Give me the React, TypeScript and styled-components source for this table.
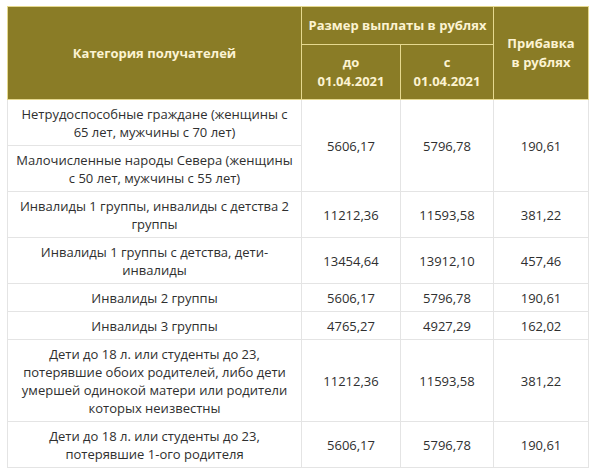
import React from "react";
import styled, { createGlobalStyle } from "styled-components";

const Global = createGlobalStyle`
  html, body { margin: 0; padding: 0; background: #ffffff; }
  body { font-family: "Open Sans", "Noto Sans", sans-serif; }
`;

const Page = styled.div`
  padding: 6px 12px 8px 7px;
`;

const Table = styled.table`
  width: 581px;
  border-collapse: collapse;
  table-layout: fixed;
  font-family: "Open Sans", "Noto Sans", sans-serif;
`;

const HeadCell = styled.th<{ $pad?: number }>`
  background: #8a7c26;
  color: #fcf3d2;
  font-weight: 700;
  font-size: 13px;
  line-height: 19px;
  text-align: center;
  vertical-align: middle;
  padding: ${(p) => p.$pad ?? 8}px 4px;
  border: 1px solid #e6d98f;
`;

const Cell = styled.td<{ $wide?: boolean }>`
  color: #2f2f2f;
  font-size: 13px;
  line-height: 18px;
  text-align: center;
  vertical-align: middle;
  padding: 4.5px ${(p) => (p.$wide ? 7 : 6)}px;
  border: 1px solid #e4e4e4;
`;

type Row = { name: string; a?: string; b?: string; c?: string; span?: number; skip?: boolean };

const rows: Row[] = [
  { name: "Нетрудоспособные граждане (женщины с 65 лет, мужчины с 70 лет)", a: "5606,17", b: "5796,78", c: "190,61", span: 2 },
  { name: "Малочисленные народы Севера (женщины с 50 лет, мужчины с 55 лет)", skip: true },
  { name: "Инвалиды 1 группы, инвалиды с детства 2 группы", a: "11212,36", b: "11593,58", c: "381,22" },
  { name: "Инвалиды 1 группы с детства, дети-инвалиды", a: "13454,64", b: "13912,10", c: "457,46" },
  { name: "Инвалиды 2 группы", a: "5606,17", b: "5796,78", c: "190,61" },
  { name: "Инвалиды 3 группы", a: "4765,27", b: "4927,29", c: "162,02" },
  { name: "Дети до 18 л. или студенты до 23, потерявшие обоих родителей, либо дети умершей одинокой матери или родители которых неизвестны", a: "11212,36", b: "11593,58", c: "381,22" },
  { name: "Дети до 18 л. или студенты до 23, потерявшие 1-ого родителя", a: "5606,17", b: "5796,78", c: "190,61" },
];

export default function App() {
  return (
    <Page>
      <Global />
      <Table>
        <colgroup>
          <col style={{ width: 294 }} />
          <col style={{ width: 99 }} />
          <col style={{ width: 93 }} />
          <col style={{ width: 95 }} />
        </colgroup>
        <thead>
          <tr>
            <HeadCell rowSpan={2}>Категория получателей</HeadCell>
            <HeadCell colSpan={2} $pad={9}>Размер выплаты в рублях</HeadCell>
            <HeadCell rowSpan={2}>
              Прибавка
              <br />в рублях
            </HeadCell>
          </tr>
          <tr>
            <HeadCell>
              до
              <br />
              01.04.2021
            </HeadCell>
            <HeadCell>
              с
              <br />
              01.04.2021
            </HeadCell>
          </tr>
        </thead>
        <tbody>
          {rows.map((r, i) => (
            <tr key={i}>
              <Cell $wide>{r.name}</Cell>
              {!r.skip && (
                <>
                  <Cell rowSpan={r.span}>{r.a}</Cell>
                  <Cell rowSpan={r.span}>{r.b}</Cell>
                  <Cell rowSpan={r.span}>{r.c}</Cell>
                </>
              )}
            </tr>
          ))}
        </tbody>
      </Table>
    </Page>
  );
}
